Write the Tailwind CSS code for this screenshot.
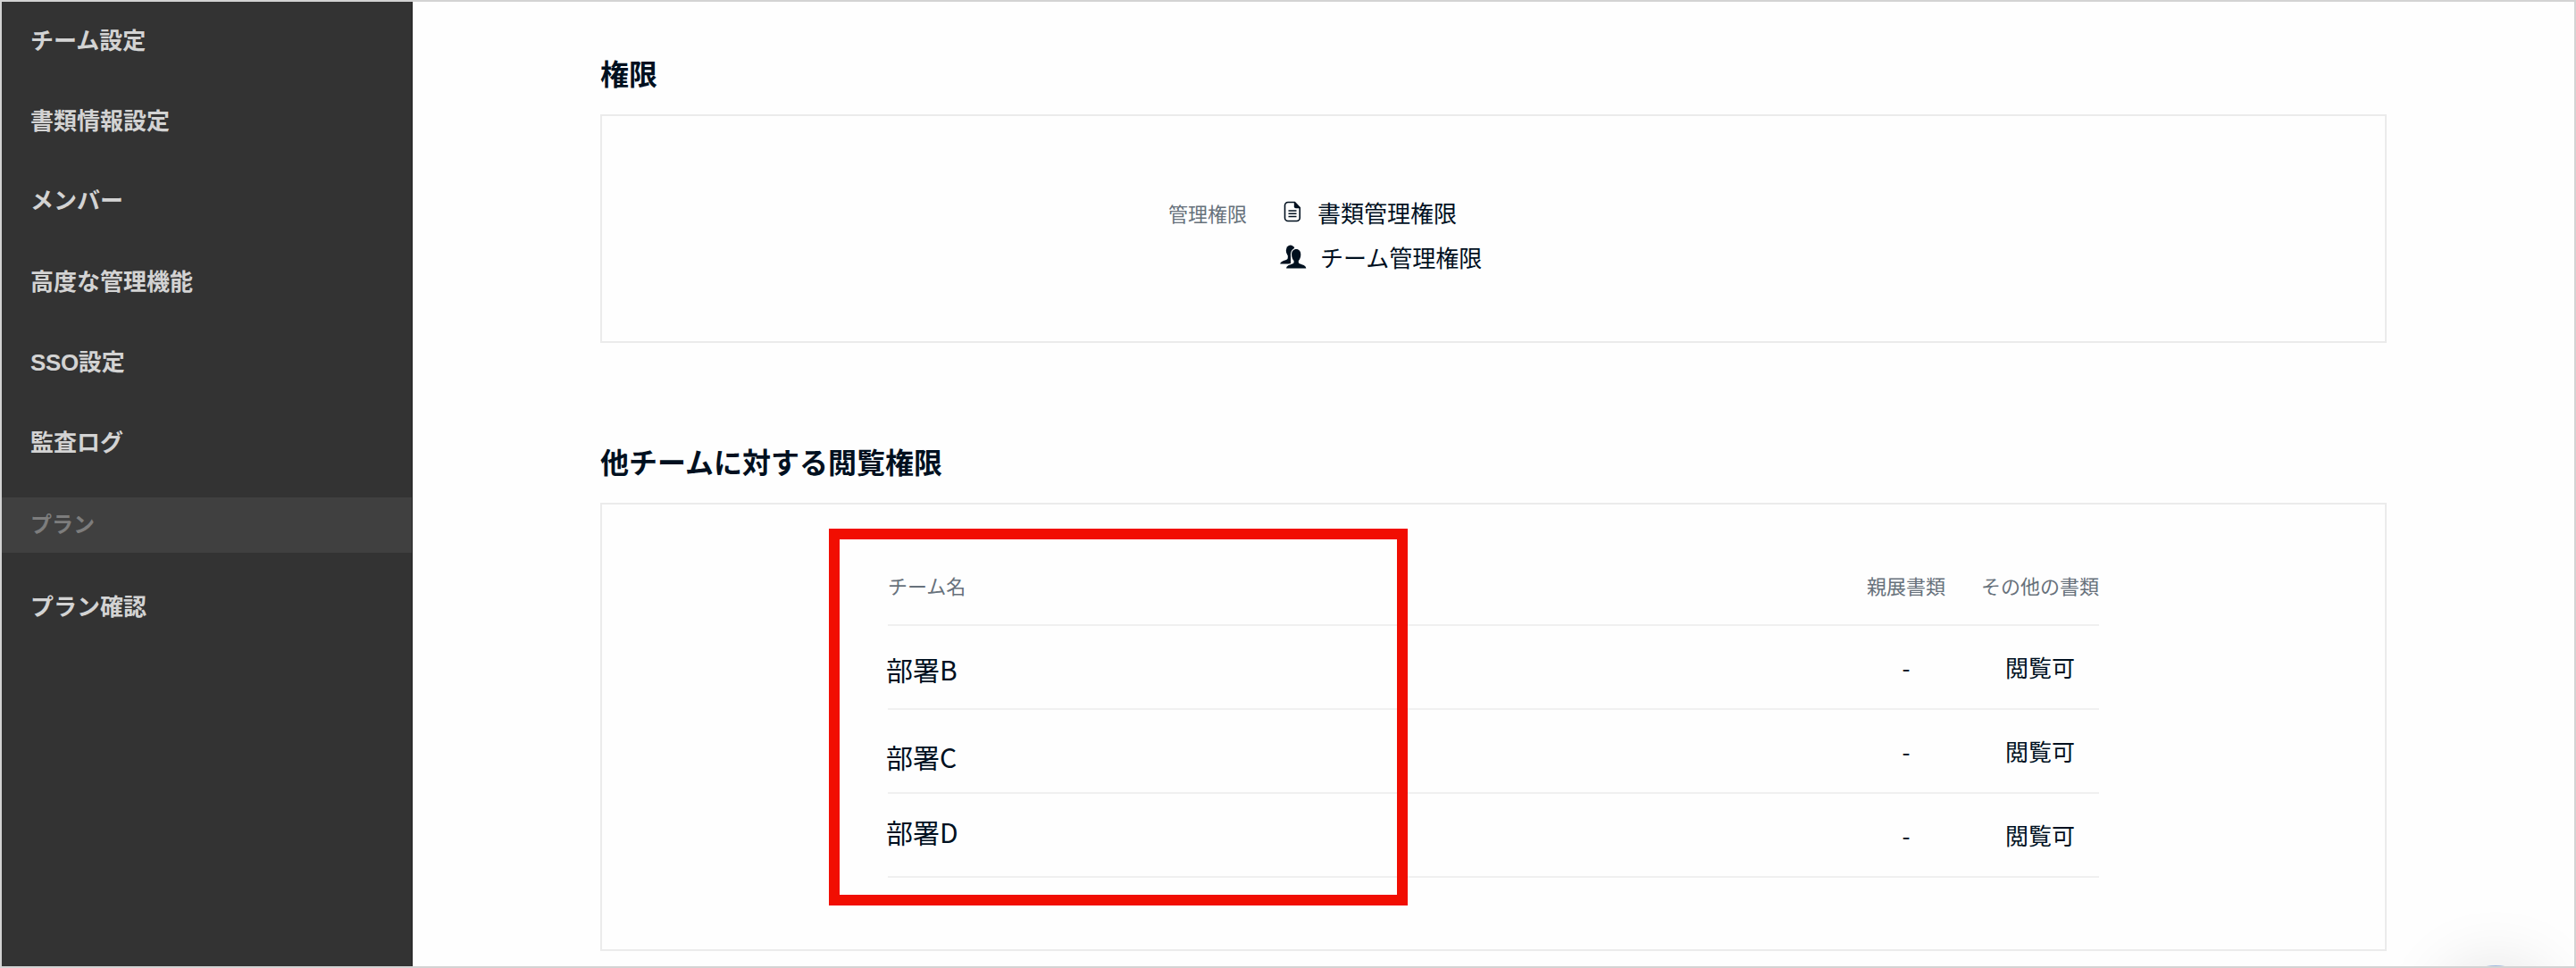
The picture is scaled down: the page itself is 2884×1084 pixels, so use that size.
<!DOCTYPE html>
<html lang="ja">
<head>
  <meta charset="UTF-8">
  <title>メンバー</title>
  <script src="https://cdn.jsdelivr.net/npm/@tailwindcss/browser@4"></script>
</head>
<body class="bg-white">
  <div class="relative flex h-[1084px] w-[2884px] overflow-hidden border-2 border-[#d3d3d3] bg-[#fefefe] font-['Noto_Sans_CJK_JP',sans-serif] text-[26px] text-[#00101f]">
    <!-- Sidebar -->
    <nav class="w-[460px] flex-none border-r border-[#222] bg-[#333] pt-px font-['Liberation_Sans','Noto_Sans_CJK_JP',sans-serif] font-bold text-[#d3d3d3]">
      <ul>
        <li class="flex h-[86px] items-center pl-8">チーム設定</li>
        <li class="flex h-[94px] items-center pl-8">書類情報設定</li>
        <li class="flex h-[84px] items-center pl-8">メンバー</li>
        <li class="flex h-[98px] items-center pl-8">高度な管理機能</li>
        <li class="flex h-[82px] items-center pl-8"><span><span class="tracking-[-0.4px]">SSO</span>設定</span></li>
        <li class="flex h-[98px] items-center pl-8">監査ログ</li>
        <li class="mt-3 flex h-[62px] items-center bg-[#404040] pl-8 text-2xl text-[#7d7d7d]">プラン</li>
        <li class="flex h-[123px] items-center pl-8">プラン確認</li>
      </ul>
    </nav>

    <!-- Main -->
    <main class="flex-1 pl-[210px] pt-[55px]">
      <section class="w-[2000px]">
        <h2 class="h-12 text-[32px]/[48px] font-bold">権限</h2>
        <div class="mt-[23px] h-64 border-2 border-[#ebebeb] pt-[82px]">
          <dl class="flex pl-[634px]">
            <dt class="h-[50px] w-[125px] text-[22px]/[52px] text-[#67717b]">管理権限</dt>
            <dd>
              <ul>
                <li class="flex h-[50px] items-center">
                  <svg class="ml-1 mr-[18px] h-6 w-5" viewBox="0 0 20 24" fill="none">
                    <path d="M5 1.500H12.500L18.200 7.500V19a3.500 3.500 0 0 1-3.500 3.500H5A3.500 3.500 0 0 1 1.500 19V5A3.500 3.500 0 0 1 5 1.500z" stroke="currentColor" stroke-width="1.600"/>
                    <path d="M11.800 1v5.200a2 2 0 0 0 2 2H19z" fill="currentColor"/>
                    <path d="M5.500 11h9M5.500 14.300h9M5.500 17.600h9" stroke="currentColor" stroke-width="1.500"/>
                  </svg>
                  書類管理権限
                </li>
                <li class="flex h-[50px] items-center">
                  <svg class="mr-[15px] h-[27px] w-[30px]" viewBox="0 0 30 27" fill="currentColor">
                    <ellipse cx="11.800" cy="6.800" rx="5" ry="6.300"/>
                    <path d="M8.800 11v3.500c0 1.500-.8 2.200-2.500 2.800C3 18.400.500 19.200.200 21.500H12V11z"/>
                    <path d="M18.200 5c-3.200 0-5.100 2.400-5.100 6 0 3 1 5.500 2.500 6.900v1.500c0 1.100-.6 1.700-2 2.200-3.300 1.300-6.100 1.900-6.500 4.900h22.200c-.4-3-3.200-3.600-6.500-4.900-1.400-.5-2-1.100-2-2.200v-1.500c1.500-1.400 2.500-3.900 2.500-6.900 0-3.600-1.900-6-5.100-6z" stroke="#fefefe" stroke-width="2.400" paint-order="stroke"/>
                  </svg>
                  チーム管理権限
                </li>
              </ul>
            </dd>
          </dl>
        </div>
      </section>

      <section class="mt-[108px] w-[2000px]">
        <h2 class="h-12 text-[32px]/[48px] font-bold">他チームに対する閲覧権限</h2>
        <div class="mt-[23px] h-[502px] border-2 border-[#ebebeb] pl-80 pt-[46px]">
          <div class="w-[1356px]">
            <div class="flex h-[90px] items-center border-b-2 border-[#f0f0f0] text-[22px] text-[#67717b]">
              <div class="flex-1">チーム名</div>
              <div class="w-[88px] text-center">親展書類</div>
              <div class="ml-10 w-[132px] text-center">その他の書類</div>
            </div>
            <div class="flex h-[94px] border-b-2 border-[#f0f0f0]">
              <div class="flex flex-1 items-center pt-1 text-[30px]"><span class="-ml-0.5">部署B</span></div>
              <div class="flex w-[88px] items-center justify-center pb-0.5">-</div>
              <div class="ml-10 flex w-[132px] items-center justify-center pb-0.5">閲覧可</div>
            </div>
            <div class="flex h-[94px] border-b-2 border-[#f0f0f0]">
              <div class="flex flex-1 items-center pt-3 text-[30px]"><span class="-ml-0.5">部署C</span></div>
              <div class="flex w-[88px] items-center justify-center pb-0.5">-</div>
              <div class="ml-10 flex w-[132px] items-center justify-center pb-0.5">閲覧可</div>
            </div>
            <div class="flex h-[94px] border-b-2 border-[#f0f0f0]">
              <div class="flex flex-1 items-center pb-2 text-[30px]"><span class="-ml-0.5">部署D</span></div>
              <div class="flex w-[88px] items-center justify-center pb-0.5">-</div>
              <div class="ml-10 flex w-[132px] items-center justify-center pb-0.5">閲覧可</div>
            </div>
          </div>
        </div>
      </section>
    </main>

    <!-- Highlight frame -->
    <div class="absolute left-[926px] top-[590px] h-[422px] w-[648px] border-[12px] border-[#f10e02]"></div>

    <!-- Chat launcher, mostly below the fold -->
    <div class="absolute left-[2736px] top-[1079px] size-28 rounded-full bg-[#9db8e0] shadow-[0_4px_80px_rgba(0,0,0,0.14)]"></div>
  </div>
</body>
</html>
